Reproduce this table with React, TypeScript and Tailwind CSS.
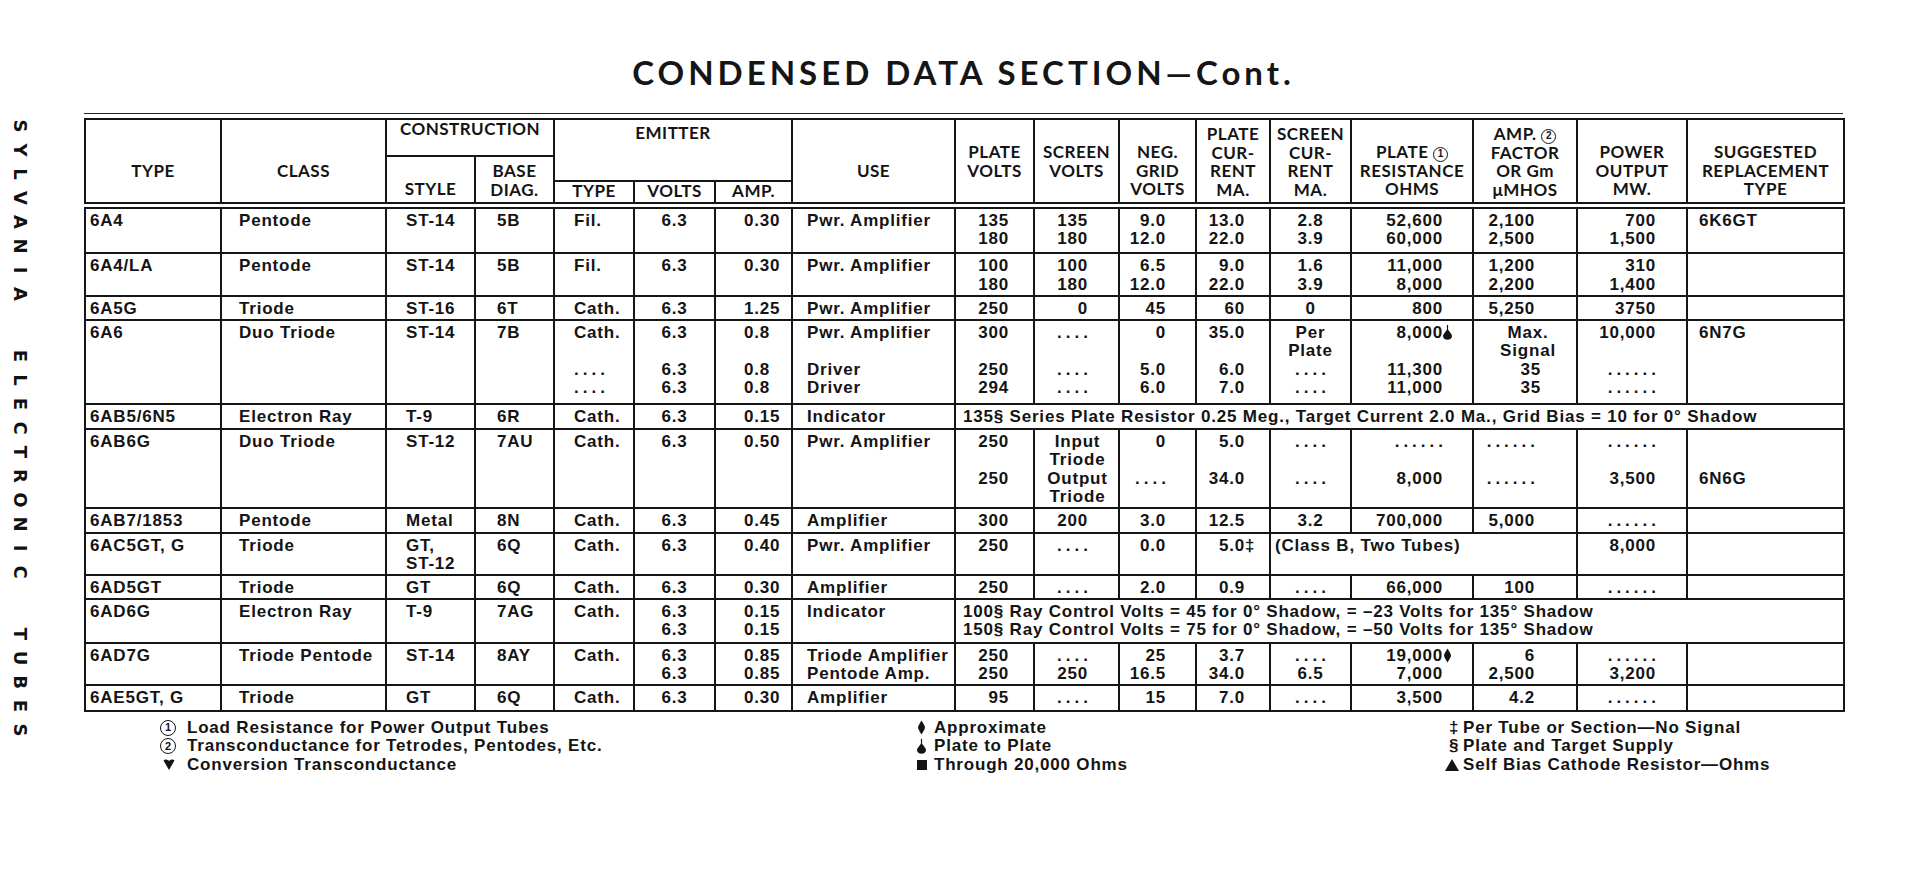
import type { ReactNode } from "react"

type Cell = string | { t: string; cs: number; cls: string }

interface Row {
  h: string
  cells: Cell[]
}

const COLS = [
  "w-[136px]", "w-[165px]", "w-[89px]", "w-[79px]", "w-[80px]", "w-[81px]", "w-[77px]", "w-[163px]",
  "w-[79px]", "w-[85px]", "w-[77px]", "w-[74px]", "w-[81px]", "w-[122px]", "w-[104px]", "w-[110px]", "w-[157px]",
]

// per column text alignment, read off the scan
const ALIGN = [
  "text-left pl-[4px]",
  "text-left pl-[17px]",
  "text-left pl-[19px]",
  "text-left pl-[21px]",
  "text-left pl-[19px]",
  "text-center",
  "text-left pl-[28px]",
  "text-left pl-[14px]",
  "text-right pr-[24px]",
  "text-right pr-[30px]",
  "text-right pr-[29px]",
  "text-right pr-[24px]",
  "text-center",
  "text-right pr-[29px]",
  "text-right pr-[41px]",
  "text-right pr-[30px]",
  "text-left pl-[11px]",
]

const ROWS: Row[] = [
  {
    h: "h-[48px]",
    cells: ["6A4", "Pentode", "ST-14", "5B", "Fil.", "6.3", "0.30", "Pwr. Amplifier", "135\n180", "135\n180", "9.0\n12.0", "13.0\n22.0", "2.8\n3.9", "52,600\n60,000", "2,100\n2,500", "700\n1,500", "6K6GT"],
  },
  {
    h: "h-[43px]",
    cells: ["6A4/LA", "Pentode", "ST-14", "5B", "Fil.", "6.3", "0.30", "Pwr. Amplifier", "100\n180", "100\n180", "6.5\n12.0", "9.0\n22.0", "1.6\n3.9", "11,000\n8,000", "1,200\n2,200", "310\n1,400", ""],
  },
  {
    h: "h-[23px]",
    cells: ["6A5G", "Triode", "ST-16", "6T", "Cath.", "6.3", "1.25", "Pwr. Amplifier", "250", "0", "45", "60", "0", "800", "5,250", "3750", ""],
  },
  {
    h: "h-[84px]",
    cells: [
      "6A6", "Duo Triode", "ST-14", "7B", "Cath.\n\n....\n....", "6.3\n\n6.3\n6.3", "0.8\n\n0.8\n0.8", "Pwr. Amplifier\n\nDriver\nDriver",
      "300\n\n250\n294", "....\n\n....\n....", "0\n\n5.0\n6.0", "35.0\n\n6.0\n7.0", "Per\nPlate\n....\n....", "8,000#d\n\n11,300\n11,000",
      { t: "Max.\nSignal\n>35\n>35", cs: 1, cls: "text-center pl-[6px]" },
      "10,000\n\n......\n......", "6N7G",
    ],
  },
  {
    h: "h-[25px]",
    cells: ["6AB5/6N5", "Electron Ray", "T-9", "6R", "Cath.", "6.3", "0.15", "Indicator", { t: "135§ Series Plate Resistor 0.25 Meg., Target Current 2.0 Ma., Grid Bias = 10 for 0° Shadow", cs: 9, cls: "text-left pl-[7px]" }],
  },
  {
    h: "h-[79px]",
    cells: [
      "6AB6G", "Duo Triode", "ST-12", "7AU", "Cath.", "6.3", "0.50", "Pwr. Amplifier", "250\n\n250",
      { t: "Input\nTriode\nOutput\nTriode", cs: 1, cls: "text-center pl-[2px]" },
      "0\n\n....", "5.0\n\n34.0", "....\n\n....", "......\n\n8,000", "......\n\n......", "......\n\n3,500", "\n\n6N6G",
    ],
  },
  {
    h: "h-[25px]",
    cells: ["6AB7/1853", "Pentode", "Metal", "8N", "Cath.", "6.3", "0.45", "Amplifier", "300", "200", "3.0", "12.5", "3.2", "700,000", "5,000", "......", ""],
  },
  {
    h: "h-[42px]",
    cells: ["6AC5GT, G", "Triode", "GT,\nST-12", "6Q", "Cath.", "6.3", "0.40", "Pwr. Amplifier", "250", "....", "0.0", "5.0#t", { t: "(Class B, Two Tubes)", cs: 3, cls: "text-left pl-[4px]" }, "8,000", ""],
  },
  {
    h: "h-[24px]",
    cells: ["6AD5GT", "Triode", "GT", "6Q", "Cath.", "6.3", "0.30", "Amplifier", "250", "....", "2.0", "0.9", "....", "66,000", "100", "......", ""],
  },
  {
    h: "h-[44px]",
    cells: ["6AD6G", "Electron Ray", "T-9", "7AG", "Cath.", "6.3\n6.3", "0.15\n0.15", "Indicator", { t: "100§ Ray Control Volts = 45 for 0° Shadow, = –23 Volts for 135° Shadow\n150§ Ray Control Volts = 75 for 0° Shadow, = –50 Volts for 135° Shadow", cs: 9, cls: "text-left pl-[7px]" }],
  },
  {
    h: "h-[42px]",
    cells: ["6AD7G", "Triode Pentode", "ST-14", "8AY", "Cath.", "6.3\n6.3", "0.85\n0.85", "Triode Amplifier\nPentode Amp.", "250\n250", "....\n250", "25\n16.5", "3.7\n34.0", "....\n6.5", "19,000#a\n7,000", "6\n2,500", "......\n3,200", ""],
  },
  {
    h: "h-[26px]",
    cells: ["6AE5GT, G", "Triode", "GT", "6Q", "Cath.", "6.3", "0.30", "Amplifier", "95", "....", "15", "7.0", "....", "3,500", "4.2", "......", ""],
  },
]

function Drop() {
  return (
    <svg width="9" height="15" viewBox="0 0 9 15" className="inline-block align-[-2px]">
      <path d="M3.9 0h1.2v5H3.9z M4.5 4C6.5 7 9 9 9 11a4.5 3.8 0 0 1-9 0C0 9 2.5 7 4.5 4z" fill="currentColor" />
    </svg>
  )
}

function Approx() {
  return (
    <svg width="9" height="15" viewBox="0 0 9 15" className="inline-block align-[-2px]">
      <path d="M4.5 0.5C6.5 4 8 6 8 7.5S6.5 11 4.5 14.5C2.5 11 1 9 1 7.5S2.5 4 4.5 0.5z" fill="currentColor" />
    </svg>
  )
}

function Circ({ n, big }: { n: string; big?: boolean }) {
  return (
    <span
      className={`inline-flex items-center justify-center rounded-full border-[1.5px] border-current font-bold leading-none tracking-normal font-['Liberation_Sans',sans-serif] ${
        big ? "w-[16px] h-[16px] text-[11px]" : "w-[15px] h-[15px] text-[10px] align-[1px]"
      }`}
    >
      {n}
    </span>
  )
}

function Line({ s }: { s: string }) {
  let cls = ""
  if (s.startsWith(">")) {
    cls = "text-right pr-[35px]"
    s = s.slice(1)
  }
  if (s === "") return <div>&nbsp;</div>
  if (/^\.+$/.test(s)) {
    return (
      <div className={cls}>
        <span className="tracking-[4px] mr-[-4px]">{s}</span>
      </div>
    )
  }
  let tail: ReactNode = null
  if (s.endsWith("#d")) {
    tail = <span className="inline-block w-0 whitespace-nowrap"><Drop /></span>
    s = s.slice(0, -2)
  } else if (s.endsWith("#a")) {
    tail = <span className="inline-block w-0 whitespace-nowrap"><Approx /></span>
    s = s.slice(0, -2)
  } else if (s.endsWith("#t")) {
    tail = <span className="inline-block w-0 whitespace-nowrap">‡</span>
    s = s.slice(0, -2)
  }
  return (
    <div className={`whitespace-nowrap ${cls}`}>
      {s}
      {tail}
    </div>
  )
}

function Lines({ t }: { t: string }) {
  return (
    <>
      {t.split("\n").map((s, i) => (
        <Line key={i} s={s} />
      ))}
    </>
  )
}

const TD = "border-2 border-[#161616] align-top pt-[3px] px-0"
const TH = "border-2 border-double border-[#161616] align-top text-center px-0 font-bold"
const FOOT_B = "border-b-[7px]"

function Head() {
  return (
    <thead className="font-['Lato',sans-serif] font-bold text-[17px] leading-[18.5px] tracking-[0.5px]">
      <tr className="h-[37px]">
        <th rowSpan={3} className={`${TH} ${FOOT_B} pt-[42px]`}>TYPE</th>
        <th rowSpan={3} className={`${TH} ${FOOT_B} pt-[42px]`}>CLASS</th>
        <th colSpan={2} className={`${TH} align-middle`}>CONSTRUCTION</th>
        <th colSpan={3} rowSpan={2} className={`${TH} align-middle pt-[4px]`}>EMITTER</th>
        <th rowSpan={3} className={`${TH} ${FOOT_B} pt-[42px]`}>USE</th>
        <th rowSpan={3} className={`${TH} ${FOOT_B} pt-[23px]`}>PLATE<br />VOLTS</th>
        <th rowSpan={3} className={`${TH} ${FOOT_B} pt-[23px]`}>SCREEN<br />VOLTS</th>
        <th rowSpan={3} className={`${TH} ${FOOT_B} pt-[23px]`}>NEG.<br />GRID<br />VOLTS</th>
        <th rowSpan={3} className={`${TH} ${FOOT_B} pt-[5px]`}>PLATE<br />CUR-<br />RENT<br />MA.</th>
        <th rowSpan={3} className={`${TH} ${FOOT_B} pt-[5px]`}>SCREEN<br />CUR-<br />RENT<br />MA.</th>
        <th rowSpan={3} className={`${TH} ${FOOT_B} pt-[23px]`}>
          PLATE <Circ n="1" />
          <br />RESISTANCE<br />OHMS
        </th>
        <th rowSpan={3} className={`${TH} ${FOOT_B} pt-[5px]`}>
          AMP. <Circ n="2" />
          <br />FACTOR<br />OR Gm<br />μMHOS
        </th>
        <th rowSpan={3} className={`${TH} ${FOOT_B} pt-[23px]`}>POWER<br />OUTPUT<br />MW.</th>
        <th rowSpan={3} className={`${TH} ${FOOT_B} pt-[23px]`}>SUGGESTED<br />REPLACEMENT<br />TYPE</th>
      </tr>
      <tr className="h-[25px]">
        <th rowSpan={2} className={`${TH} ${FOOT_B} pt-[23px]`}>STYLE</th>
        <th rowSpan={2} className={`${TH} ${FOOT_B} pt-[5px]`}>BASE<br />DIAG.</th>
      </tr>
      <tr className="h-[24px]">
        <th className={`${TH} ${FOOT_B} align-middle`}>TYPE</th>
        <th className={`${TH} ${FOOT_B} align-middle`}>VOLTS</th>
        <th className={`${TH} ${FOOT_B} align-middle`}>AMP.</th>
      </tr>
    </thead>
  )
}

function Body() {
  return (
    <tbody className="font-['Liberation_Sans','DejaVu_Sans',sans-serif] font-bold text-[17px] leading-[18.5px] tracking-[0.8px]">
      {ROWS.map((r, ri) => {
        let col = 0
        return (
          <tr key={ri} className={r.h}>
            {r.cells.map((c, ci) => {
              const at = col
              if (typeof c === "string") {
                col += 1
                return (
                  <td key={ci} className={`${TD} ${ALIGN[at]}`}>
                    <Lines t={c} />
                  </td>
                )
              }
              col += c.cs
              return (
                <td key={ci} colSpan={c.cs} className={`${TD} ${c.cls}`}>
                  <Lines t={c.t} />
                </td>
              )
            })}
          </tr>
        )
      })}
    </tbody>
  )
}

const SPINE = ["SYLVANIA", "ELECTRONIC", "TUBES"]

function Spine() {
  return (
    <div className="w-[40px] flex flex-col items-center pt-[114px] font-['DejaVu_Sans',sans-serif] font-bold text-[18px] text-[#111]">
      {SPINE.map((w, wi) => (
        <div key={w} className={wi ? "mt-[38px]" : ""}>
          {w.split("").map((ch, i) => (
            <div key={i} className="h-[24px] w-[24px] flex items-center justify-center">
              <span className="inline-block rotate-90 leading-none">{ch}</span>
            </div>
          ))}
        </div>
      ))}
    </div>
  )
}

function Note({ sym, text, w }: { sym: ReactNode; text: string; w: string }) {
  return (
    <div className="flex h-[18.5px]">
      <div className={`${w} shrink-0 h-[18.5px] flex items-center`}>{sym}</div>
      <div className="whitespace-nowrap">{text}</div>
    </div>
  )
}

function Footnotes() {
  return (
    <div className="mt-[7px] pl-[76px] flex font-['Liberation_Sans','DejaVu_Sans',sans-serif] font-bold text-[17px] leading-[18.5px] tracking-[0.8px]">
      <div className="w-[757px] shrink-0">
        <Note w="w-[27px]" sym={<Circ n="1" big />} text="Load Resistance for Power Output Tubes" />
        <Note w="w-[27px]" sym={<Circ n="2" big />} text="Transconductance for Tetrodes, Pentodes, Etc." />
        <Note
          w="w-[27px]"
          sym={
            <svg width="12" height="12" viewBox="0 0 12 12" className="ml-[3px]">
              <path d="M0.5 1.5C2 0 4.5 0.5 6 2C7.5 0.5 10 0 11.5 1.5L6 11Z" fill="currentColor" />
            </svg>
          }
          text="Conversion Transconductance"
        />
      </div>
      <div className="w-[528px] shrink-0">
        <Note w="w-[17px]" sym={<Approx />} text="Approximate" />
        <Note w="w-[17px]" sym={<Drop />} text="Plate to Plate" />
        <Note
          w="w-[17px]"
          sym={
            <svg width="10" height="10" viewBox="0 0 10 10">
              <rect width="10" height="10" fill="currentColor" />
            </svg>
          }
          text="Through 20,000 Ohms"
        />
      </div>
      <div className="shrink-0">
        <Note w="w-[18px]" sym={<span className="pl-[4px]">‡</span>} text="Per Tube or Section—No Signal" />
        <Note w="w-[18px]" sym={<span className="pl-[4px]">§</span>} text="Plate and Target Supply" />
        <Note
          w="w-[18px]"
          sym={
            <svg width="14" height="12" viewBox="0 0 14 12">
              <path d="M7 0L14 12H0Z" fill="currentColor" />
            </svg>
          }
          text="Self Bias Cathode Resistor—Ohms"
        />
      </div>
    </div>
  )
}

export default function App() {
  return (
    <div className="w-[1913px] h-[878px] overflow-hidden bg-white text-[#141414] flex">
      <div className="w-[84px] shrink-0">
        <Spine />
      </div>
      <div className="w-[1759px] shrink-0">
        <h1 className="h-[113px] pt-[56px] text-center font-['Lato',sans-serif] font-bold text-[33px] leading-[32px] tracking-[4px] text-[#151515]">
          CONDENSED DATA SECTION—Cont.
        </h1>
        <div className="border-t border-[#222] pt-[4px]">
          <table className="w-[1759px] table-fixed border-collapse border-2 border-[#161616]">
            <colgroup>
              {COLS.map((c, i) => (
                <col key={i} className={c} />
              ))}
            </colgroup>
            <Head />
            <Body />
          </table>
        </div>
        <Footnotes />
      </div>
    </div>
  )
}
